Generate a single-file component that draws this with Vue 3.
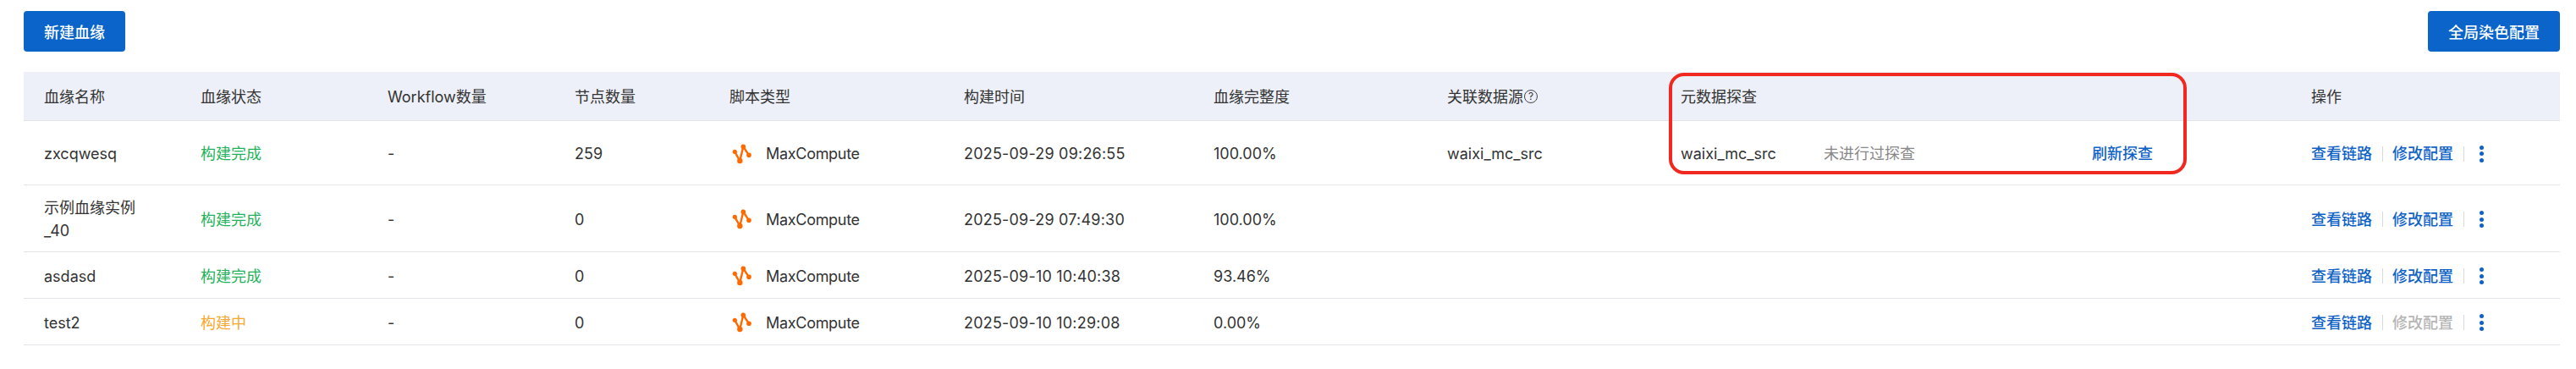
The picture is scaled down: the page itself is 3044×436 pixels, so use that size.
<script setup>
const rows = [
  { name: 'zxcqwesq', status: '构建完成', tone: 'done', nodes: 259, time: '2025-09-29 09:26:55', rate: '100.00%', source: 'waixi_mc_src', probe: true, h: 'h76' },
  { name: '示例血缘实例_40', status: '构建完成', tone: 'done', nodes: 0, time: '2025-09-29 07:49:30', rate: '100.00%', h: 'h79' },
  { name: 'asdasd', status: '构建完成', tone: 'done', nodes: 0, time: '2025-09-10 10:40:38', rate: '93.46%', h: 'h55' },
  { name: 'test2', status: '构建中', tone: 'building', nodes: 0, time: '2025-09-10 10:29:08', rate: '0.00%', h: 'h55', locked: true },
]
const widths = [185, 221, 221, 183, 277, 295, 276, 276, 745, 318]
</script>

<template>
  <div class="page">
    <div class="toolbar">
      <button class="btn">新建血缘</button>
      <button class="btn">全局染色配置</button>
    </div>
    <div class="table-wrap">
      <table>
        <colgroup>
          <col v-for="w in widths" :key="w" :width="w" />
        </colgroup>
        <thead>
          <tr>
            <th>血缘名称</th>
            <th>血缘状态</th>
            <th>Workflow数量</th>
            <th>节点数量</th>
            <th>脚本类型</th>
            <th>构建时间</th>
            <th>血缘完整度</th>
            <th><span class="with-help">关联数据源<span class="help">?</span></span></th>
            <th>元数据探查</th>
            <th>操作</th>
          </tr>
        </thead>
        <tbody>
          <tr v-for="row in rows" :key="row.name">
            <td :class="row.h">{{ row.name }}</td>
            <td :class="row.tone">{{ row.status }}</td>
            <td>-</td>
            <td>{{ row.nodes }}</td>
            <td>
              <div class="script">
                <svg width="24" height="24" viewBox="0 0 24 24">
                  <path d="M3.3 9.3 9.3 20 13.3 3.3 20 13.3" fill="none" stroke="#ff6a00" stroke-width="2.4" />
                  <circle cx="3.3" cy="9.3" r="2.6" fill="#ff6a00" />
                  <circle cx="9.3" cy="20" r="3.2" fill="#ff6a00" />
                  <circle cx="13.3" cy="3.3" r="2.8" fill="#ff6a00" />
                  <circle cx="20" cy="13.3" r="2.8" fill="#ff6a00" />
                </svg>
                <span class="script-name">MaxCompute</span>
              </div>
            </td>
            <td class="time">{{ row.time }}</td>
            <td>{{ row.rate }}</td>
            <td>{{ row.source }}</td>
            <td>
              <div v-if="row.probe" class="probe">
                <span>waixi_mc_src</span>
                <span class="muted">未进行过探查</span>
                <a class="link">刷新探查</a>
              </div>
            </td>
            <td>
              <div class="ops">
                <a class="link">查看链路</a>
                <i class="sep"></i>
                <a class="link" :class="{ off: row.locked }">修改配置</a>
                <i class="sep"></i>
                <span class="more"><b></b><b></b><b></b></span>
              </div>
            </td>
          </tr>
        </tbody>
      </table>
      <div class="mark"></div>
    </div>
  </div>
</template>

<style scoped>
.page {
  padding: 13px 19px 28px 28px;
  font-family: Inter, "Noto Sans CJK SC", sans-serif;
  font-size: 18px;
  line-height: 27px;
  color: #333;
  background: #fff;
}
.toolbar {
  display: flex;
  justify-content: space-between;
  margin-bottom: 24px;
}
.btn {
  height: 48px;
  padding: 0 24px;
  border: 0;
  border-radius: 4px;
  background: #0a64c9;
  color: #fff;
  font: 500 18px Inter, "Noto Sans CJK SC", sans-serif;
}
.table-wrap {
  position: relative;
}
table {
  width: 2997px;
  table-layout: fixed;
  border-collapse: separate;
  border-spacing: 0;
}
th {
  box-sizing: border-box;
  height: 58px;
  padding: 1px 24px 0;
  background: #edf0f8;
  border-bottom: 1px solid #e2e4e8;
  text-align: left;
  font-weight: 400;
}
td {
  box-sizing: border-box;
  padding: 2px 24px 0;
  border-bottom: 1px solid #e2e4e8;
  vertical-align: middle;
}
.h76 { height: 76px; }
.h79 { height: 79px; }
.h55 { height: 55px; }
.done { color: #1fb25a; }
.building { color: #fba72d; }
.with-help {
  display: flex;
  align-items: center;
}
.help {
  box-sizing: border-box;
  width: 16px;
  height: 16px;
  margin-left: 1px;
  border: 1px solid #444;
  border-radius: 50%;
  font-size: 12px;
  line-height: 14px;
  text-align: center;
}
.script {
  display: flex;
  align-items: center;
  gap: 16px;
  margin-left: 3px;
}
.script-name {
  letter-spacing: -0.3px;
}
.time {
  letter-spacing: 0.2px;
}
.probe {
  display: grid;
  grid-template-columns: 169px 317px auto;
}
.muted {
  color: #888;
}
.link {
  color: #0f63c6;
  font-weight: 500;
}
.link.off {
  color: #b5b5b5;
}
.ops {
  display: flex;
  align-items: center;
}
.sep {
  width: 1px;
  height: 18px;
  margin: 0 11.5px;
  background: #d9d9d9;
}
.more {
  display: flex;
  flex-direction: column;
  gap: 2.5px;
  margin-left: 7px;
}
.more b {
  width: 5px;
  height: 5px;
  border-radius: 50%;
  background: #0f63c6;
}
.mark {
  position: absolute;
  left: 1944px;
  top: 1px;
  width: 612px;
  height: 120px;
  box-sizing: border-box;
  border: 4px solid #f0281f;
  border-radius: 18px;
}
</style>
